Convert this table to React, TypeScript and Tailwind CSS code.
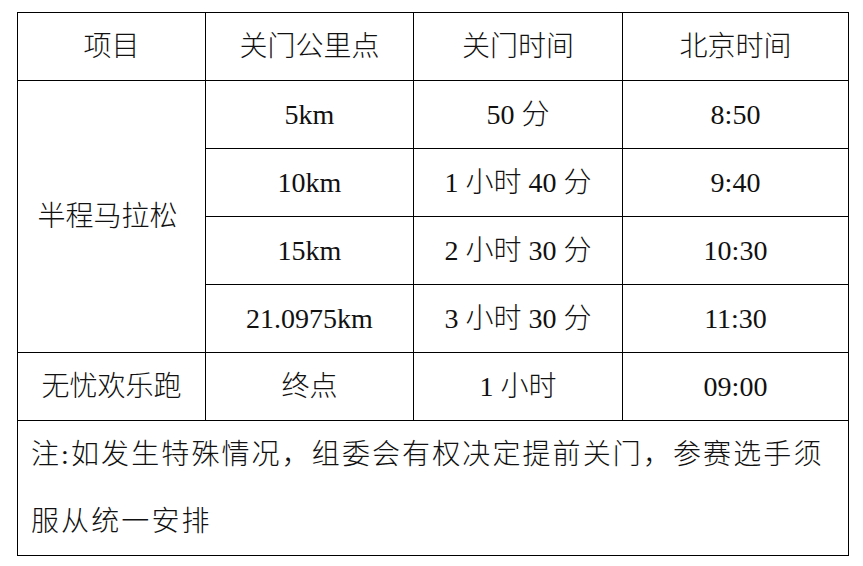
const rows = [
  { km: "5km", close: "50 分", beijing: "8:50" },
  { km: "10km", close: "1 小时 40 分", beijing: "9:40" },
  { km: "15km", close: "2 小时 30 分", beijing: "10:30" },
  { km: "21.0975km", close: "3 小时 30 分", beijing: "11:30" },
];

const cell = "border border-black text-center align-middle p-0 h-[68px]";

export default function App() {
  return (
    <div className="w-[863px] h-[566px] bg-white pt-3 pl-[17px] text-[#111] text-[28px] font-light font-[family-name:'Liberation_Serif','Noto_Sans_CJK_SC',serif]">
      <table className="border-collapse table-fixed w-[831px]">
        <colgroup>
          <col className="w-[188px]" />
          <col className="w-[208px]" />
          <col className="w-[209px]" />
          <col className="w-[226px]" />
        </colgroup>
        <tbody>
          {/* header */}
          <tr>
            <td className={cell}>项目</td>
            <td className={cell}>关门公里点</td>
            <td className={cell}>关门时间</td>
            <td className={cell}>北京时间</td>
          </tr>

          {rows.map((r, i) => (
            <tr key={r.km}>
              {i === 0 && (
                <td rowSpan={4} className="border border-black text-center align-middle p-0 pr-2">
                  半程马拉松
                </td>
              )}
              <td className={cell}>{r.km}</td>
              <td className={cell}>{r.close}</td>
              <td className={cell}>{r.beijing}</td>
            </tr>
          ))}

          <tr>
            <td className={cell}>无忧欢乐跑</td>
            <td className={cell}>终点</td>
            <td className={cell}>1 小时</td>
            <td className={cell}>09:00</td>
          </tr>

          {/* note */}
          <tr>
            <td colSpan={4} className="border border-black p-0 pl-[13px] text-left h-[134px]">
              <div className="leading-[67px] tracking-[2.1px] whitespace-nowrap">
                注:如发生特殊情况，组委会有权决定提前关门，参赛选手须
              </div>
              <div className="leading-[67px] tracking-[2.1px]">服从统一安排</div>
            </td>
          </tr>
        </tbody>
      </table>
    </div>
  );
}
